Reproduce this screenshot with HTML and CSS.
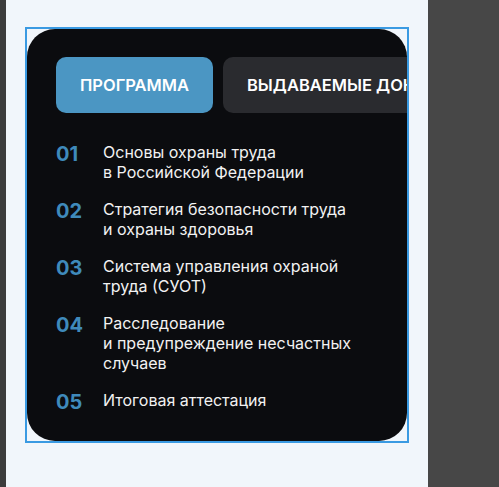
FILE: index.html
```html
<!DOCTYPE html>
<html lang="ru">
<head>
<meta charset="utf-8">
<link rel="stylesheet" href="styles.css">
</head>
<body>
<div class="strip"></div>
<main class="panel">
  <div class="outline">
    <section class="card">
      <div class="tabs">
        <button class="tab tab-active">ПРОГРАММА</button>
        <button class="tab">ВЫДАВАЕМЫЕ ДОКУМЕНТЫ</button>
      </div>
      <ol class="list">
        <li class="item"><span class="num">01</span><span class="text">Основы охраны труда<br>в Российской Федерации</span></li>
        <li class="item"><span class="num">02</span><span class="text">Стратегия безопасности труда<br>и охраны здоровья</span></li>
        <li class="item"><span class="num">03</span><span class="text">Система управления охраной<br>труда (СУОТ)</span></li>
        <li class="item"><span class="num">04</span><span class="text">Расследование<br>и предупреждение несчастных<br>случаев</span></li>
        <li class="item"><span class="num">05</span><span class="text">Итоговая аттестация</span></li>
      </ol>
    </section>
  </div>
</main>
<div class="side"></div>
</body>
</html>
```
FILE: styles.css
```css
html, body {
  margin: 0;
  height: 100%;
}
body {
  display: flex;
  background: #474747;
  font-family: Inter, "Noto Sans", sans-serif;
}
.strip {
  width: 6px;
  flex-shrink: 0;
  background: #3c3c3c;
}
.panel {
  width: 422px;
  flex-shrink: 0;
  background: #f1f6fb;
  padding: 27px 0 0 19px;
  box-sizing: border-box;
}
.side {
  flex: 1;
}
.outline {
  width: 380px;
  border: 2px solid #3a9ae2;
}
.card {
  height: 412px;
  box-sizing: border-box;
  background: #0b0c0f;
  border-radius: 28px;
  overflow: hidden;
  padding: 28px 0 0 29px;
}
.tabs {
  display: flex;
  gap: 10px;
}
.tab {
  flex-shrink: 0;
  height: 56px;
  padding: 0 24px;
  border: 0;
  border-radius: 10px;
  background: #2a2b2f;
  color: #ffffff;
  font-family: Inter, "Noto Sans", sans-serif;
  font-size: 16.5px;
  font-weight: 600;
  white-space: nowrap;
}
.tab-active {
  background: #4b96c3;
}
.list {
  list-style: none;
  margin: 29px 0 0;
  padding: 0;
  display: flex;
  flex-direction: column;
  gap: 17px;
}
.item {
  display: flex;
  align-items: flex-start;
}
.num {
  width: 47px;
  flex-shrink: 0;
  color: #3f8abb;
  font-size: 20px;
  font-weight: 700;
  line-height: 24px;
}
.text {
  color: #f2f2f2;
  font-size: 16px;
  line-height: 20px;
}
```
